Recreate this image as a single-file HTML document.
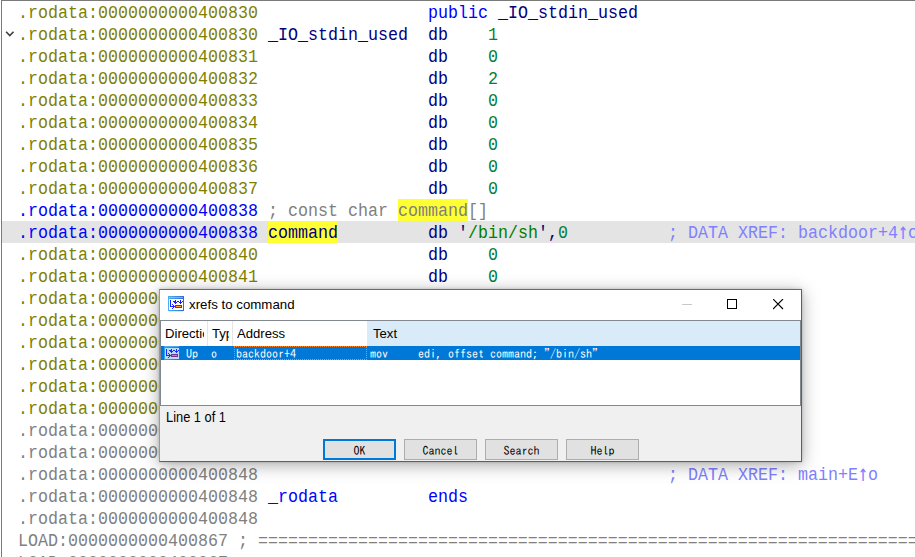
<!DOCTYPE html>
<html><head><meta charset="utf-8"><title>xrefs to command</title>
<style>
html,body{margin:0;padding:0;background:#fff;}
body{width:915px;height:557px;overflow:hidden;position:relative;font-family:"Liberation Sans",sans-serif;}
#view{position:absolute;left:0;top:0;width:915px;height:557px;overflow:hidden;background:#fff;}
#btop{position:absolute;left:1px;top:0;width:914px;height:1px;background:#7a7a7a;}
#bleft{position:absolute;left:1px;top:0;width:1px;height:557px;background:#7a7a7a;}
.r{position:absolute;left:2px;width:913px;height:22px;white-space:pre;font-family:"Liberation Mono","DejaVu Sans Mono",monospace;font-size:16.66px;line-height:22px;}
.r.cur{background:#e4e4e4;}
.s{position:absolute;top:0;height:22px;margin-left:-2px;transform:translateY(2px) scaleY(1.083);transform-origin:0 15px;}
.s.dj{font-family:"DejaVu Sans Mono","Liberation Mono",monospace;transform:translateY(1.5px) scaleY(1.4);}
.hl{position:absolute;top:0;height:22px;background:#ffff33;}
#chev{position:absolute;left:4px;top:29px;}
/* dialog */
#dlg{position:absolute;left:159px;top:289px;width:641px;height:171px;border:1px solid #5f5f5f;border-left-color:#9a9a9a;border-top-color:#6a6a6a;background:#f0f0f0;box-shadow:0 0 3px rgba(0,0,0,.18),0 3px 16px rgba(0,0,0,.34);font-size:12px;color:#000;}
#title{position:absolute;left:0;top:0;width:641px;height:30px;background:#fff;}
#title .t{position:absolute;left:29px;top:7px;font-size:13.6px;line-height:16px;white-space:pre;transform:scaleX(.977);transform-origin:0 0;}
#list{position:absolute;left:0;top:30px;width:639px;height:84px;border:1px solid #828790;background:#fff;}
#hdr{position:absolute;left:0;top:0;width:639px;height:25px;}
.h{position:absolute;top:0;height:25px;line-height:25px;font-size:13.6px;overflow:hidden;white-space:pre;}
.h span{display:inline-block;transform:scaleX(.965);transform-origin:0 0;}
.sep{position:absolute;top:0;width:1px;height:25px;background:#e5e5e5;}
#sel{position:absolute;left:0;top:25px;width:639px;height:14px;background:#0078d7;color:#fff;overflow:hidden;}
.c{position:absolute;top:0;height:14px;line-height:14px;white-space:pre;font-family:"IPAGothic","Liberation Mono",monospace;font-size:12px;}
#focus{position:absolute;left:73px;top:0;width:131px;height:12px;border:1px dotted #ff8728;}
#status{position:absolute;left:6px;top:120.4px;font-size:13.6px;line-height:16px;white-space:pre;transform:scale(.945,1.02);transform-origin:0 100%;}
.b{position:absolute;top:149px;width:71px;height:19px;border:1px solid #adadad;background:#e1e1e1;text-align:center;line-height:20px;font-family:"IPAGothic","Liberation Mono",monospace;font-size:12px;}
.b span{display:inline-block;}
.b.def{border:2px solid #0078d7;width:69px;height:17px;line-height:18px;}
</style></head><body>
<div id="view">
<div class="r" style="top:1px"><span class="s" style="left:18px;color:#808000">.rodata:0000000000400830</span><span class="s" style="left:428px;color:#0000ff">public</span><span class="s" style="left:498px;color:#000080">_IO_stdin_used</span></div>
<div class="r" style="top:23px"><span class="s" style="left:18px;color:#808000">.rodata:0000000000400830</span><span class="s" style="left:268px;color:#000080">_IO_stdin_used</span><span class="s" style="left:428px;color:#000080">db</span><span class="s" style="left:488px;color:#008040">1</span></div>
<div class="r" style="top:45px"><span class="s" style="left:18px;color:#808000">.rodata:0000000000400831</span><span class="s" style="left:428px;color:#000080">db</span><span class="s" style="left:488px;color:#008040">0</span></div>
<div class="r" style="top:67px"><span class="s" style="left:18px;color:#808000">.rodata:0000000000400832</span><span class="s" style="left:428px;color:#000080">db</span><span class="s" style="left:488px;color:#008040">2</span></div>
<div class="r" style="top:89px"><span class="s" style="left:18px;color:#808000">.rodata:0000000000400833</span><span class="s" style="left:428px;color:#000080">db</span><span class="s" style="left:488px;color:#008040">0</span></div>
<div class="r" style="top:111px"><span class="s" style="left:18px;color:#808000">.rodata:0000000000400834</span><span class="s" style="left:428px;color:#000080">db</span><span class="s" style="left:488px;color:#008040">0</span></div>
<div class="r" style="top:133px"><span class="s" style="left:18px;color:#808000">.rodata:0000000000400835</span><span class="s" style="left:428px;color:#000080">db</span><span class="s" style="left:488px;color:#008040">0</span></div>
<div class="r" style="top:155px"><span class="s" style="left:18px;color:#808000">.rodata:0000000000400836</span><span class="s" style="left:428px;color:#000080">db</span><span class="s" style="left:488px;color:#008040">0</span></div>
<div class="r" style="top:177px"><span class="s" style="left:18px;color:#808000">.rodata:0000000000400837</span><span class="s" style="left:428px;color:#000080">db</span><span class="s" style="left:488px;color:#008040">0</span></div>
<div class="r" style="top:199px"><span class="s" style="left:18px;color:#0000ff">.rodata:0000000000400838</span><span class="s" style="left:268px;color:#808080">; const char</span><i class="hl" style="left:396px;width:70px"></i><span class="s" style="left:398px;color:#808080">command</span><span class="s" style="left:468px;color:#808080">[]</span></div>
<div class="r cur" style="top:221px"><span class="s" style="left:18px;color:#0000ff">.rodata:0000000000400838</span><i class="hl" style="left:266px;width:70px"></i><span class="s" style="left:268px;color:#000080">command</span><span class="s" style="left:428px;color:#000080">db</span><span class="s" style="left:458px;color:#000080">'</span><span class="s" style="left:468px;color:#008000">/bin/sh</span><span class="s" style="left:538px;color:#000080">',</span><span class="s" style="left:558px;color:#008040">0</span><span class="s" style="left:668px;color:#8080ff">; DATA XREF: backdoor+4</span><span class="s dj" style="left:898px;color:#8080ff">↑</span><span class="s" style="left:908px;color:#8080ff">c</span></div>
<div class="r" style="top:243px"><span class="s" style="left:18px;color:#808000">.rodata:0000000000400840</span><span class="s" style="left:428px;color:#000080">db</span><span class="s" style="left:488px;color:#008040">0</span></div>
<div class="r" style="top:265px"><span class="s" style="left:18px;color:#808000">.rodata:0000000000400841</span><span class="s" style="left:428px;color:#000080">db</span><span class="s" style="left:488px;color:#008040">0</span></div>
<div class="r" style="top:287px"><span class="s" style="left:18px;color:#808000">.rodata:0000000000400842</span><span class="s" style="left:428px;color:#000080">db</span><span class="s" style="left:488px;color:#008040">0</span></div>
<div class="r" style="top:309px"><span class="s" style="left:18px;color:#808000">.rodata:0000000000400843</span><span class="s" style="left:428px;color:#000080">db</span><span class="s" style="left:488px;color:#008040">0</span></div>
<div class="r" style="top:331px"><span class="s" style="left:18px;color:#808000">.rodata:0000000000400844</span><span class="s" style="left:428px;color:#000080">db</span><span class="s" style="left:488px;color:#008040">0</span></div>
<div class="r" style="top:353px"><span class="s" style="left:18px;color:#808000">.rodata:0000000000400845</span><span class="s" style="left:428px;color:#000080">db</span><span class="s" style="left:488px;color:#008040">0</span></div>
<div class="r" style="top:375px"><span class="s" style="left:18px;color:#808000">.rodata:0000000000400846</span><span class="s" style="left:428px;color:#000080">db</span><span class="s" style="left:488px;color:#008040">0</span></div>
<div class="r" style="top:397px"><span class="s" style="left:18px;color:#808000">.rodata:0000000000400847</span><span class="s" style="left:428px;color:#000080">db</span><span class="s" style="left:488px;color:#008040">0</span></div>
<div class="r" style="top:419px"><span class="s" style="left:18px;color:#808080">.rodata:0000000000400848</span></div>
<div class="r" style="top:441px"><span class="s" style="left:18px;color:#808080">.rodata:0000000000400848</span></div>
<div class="r" style="top:463px"><span class="s" style="left:18px;color:#808080">.rodata:0000000000400848</span><span class="s" style="left:668px;color:#8080ff">; DATA XREF: main+E</span><span class="s dj" style="left:858px;color:#8080ff">↑</span><span class="s" style="left:868px;color:#8080ff">o</span></div>
<div class="r" style="top:485px"><span class="s" style="left:18px;color:#808080">.rodata:0000000000400848</span><span class="s" style="left:268px;color:#0000ff">_rodata</span><span class="s" style="left:428px;color:#0000ff">ends</span></div>
<div class="r" style="top:507px"><span class="s" style="left:18px;color:#808080">.rodata:0000000000400848</span></div>
<div class="r" style="top:529px"><span class="s" style="left:18px;color:#808080">LOAD:0000000000400867</span><span class="s" style="left:238px;color:#808080">; ===========================================================================</span></div>
<div class="r" style="top:551px"><span class="s" style="left:18px;color:#808080">LOAD:0000000000400867</span></div>
<div id="btop"></div><div id="bleft"></div>
<svg id="chev" width="12" height="10" viewBox="0 0 12 10"><path d="M2.1 2.7 L5.8 6.6 L9.5 2.7" fill="none" stroke="#404040" stroke-width="1.6"/></svg>
</div>
<div id="dlg">
 <div id="title">
  <svg style="position:absolute;left:8px;top:6px" width="16" height="16" viewBox="0 0 16 16" shape-rendering="crispEdges">
   <defs><linearGradient id="g1" x1="0" x2="1" y1="0" y2="0"><stop offset="0" stop-color="#45b4f2"/><stop offset="1" stop-color="#3569d6"/></linearGradient></defs>
   <rect x="0" y="0" width="16" height="15" fill="url(#g1)"/>
   <rect x="1" y="1" width="14" height="1" fill="#7fd0fa" opacity=".7"/>
   <rect x="1" y="3" width="14" height="11" fill="#fff"/>
   <rect x="2" y="4" width="1" height="7" fill="#1a1aff"/>
   <rect x="2" y="10" width="5" height="1" fill="#1a1aff"/>
   <rect x="5" y="9" width="1" height="3" fill="#1a1aff"/><rect x="4" y="8" width="1" height="1" fill="#1a1aff"/><rect x="4" y="12" width="1" height="1" fill="#1a1aff"/>
   <rect x="5" y="5" width="2" height="1" fill="#1a1aff"/><rect x="9" y="5" width="2" height="1" fill="#1a1aff"/><rect x="14" y="5" width="1" height="1" fill="#1a1aff"/>
   <rect x="7" y="4" width="1" height="4" fill="#1a1aff"/><rect x="6" y="6" width="3" height="1" fill="#1a1aff"/>
   <rect x="12" y="4" width="1" height="4" fill="#1a1aff"/><rect x="11" y="6" width="3" height="1" fill="#1a1aff"/>
   <rect x="7" y="9" width="7" height="3" fill="#a0187c"/>
   <rect x="8" y="10" width="5" height="1" fill="#ffa030"/>
   <rect x="1" y="15" width="14" height="1" fill="#3a6fd8" opacity=".18"/>
  </svg>
  <span class="t">xrefs to command</span>
  <svg style="position:absolute;left:522px;top:14px" width="12" height="2"><rect x="0" y="0" width="10" height="1" fill="#c8c8c8"/></svg>
  <svg style="position:absolute;left:567px;top:9px" width="12" height="12"><rect x="0.5" y="0.5" width="9" height="9" fill="none" stroke="#000" stroke-width="1"/></svg>
  <svg style="position:absolute;left:613px;top:9px" width="12" height="12"><path d="M0 0 L10 10 M10 0 L0 10" fill="none" stroke="#000" stroke-width="1.1"/></svg>
 </div>
 <div id="list">
  <div id="hdr">
   <div class="h" style="left:206px;width:433px;background:#d9ebf9;"></div>
   <div class="h" style="left:4px;width:39px;"><span>Direction</span></div>
   <div class="sep" style="left:46px"></div>
   <div class="h" style="left:51px;width:17px;"><span>Type</span></div>
   <div class="sep" style="left:71px"></div>
   <div class="h" style="left:76px;width:120px;"><span>Address</span></div>
   <div class="h" style="left:211.5px;width:120px;"><span>Text</span></div>
  </div>
  <div id="sel">
   <svg style="position:absolute;left:3px;top:-1px" width="16" height="16" viewBox="0 0 16 16" shape-rendering="crispEdges">
   <defs><linearGradient id="g2" x1="0" x2="1" y1="0" y2="0"><stop offset="0" stop-color="#45b4f2"/><stop offset="1" stop-color="#3569d6"/></linearGradient></defs>
   <rect x="0" y="0" width="16" height="15" fill="url(#g2)"/>
   <rect x="1" y="1" width="14" height="1" fill="#7fd0fa" opacity=".7"/>
   <rect x="1" y="3" width="14" height="11" fill="#fff"/>
   <rect x="2" y="4" width="1" height="7" fill="#1a1aff"/>
   <rect x="2" y="10" width="5" height="1" fill="#1a1aff"/>
   <rect x="5" y="9" width="1" height="3" fill="#1a1aff"/><rect x="4" y="8" width="1" height="1" fill="#1a1aff"/><rect x="4" y="12" width="1" height="1" fill="#1a1aff"/>
   <rect x="5" y="5" width="2" height="1" fill="#1a1aff"/><rect x="9" y="5" width="2" height="1" fill="#1a1aff"/><rect x="14" y="5" width="1" height="1" fill="#1a1aff"/>
   <rect x="7" y="4" width="1" height="4" fill="#1a1aff"/><rect x="6" y="6" width="3" height="1" fill="#1a1aff"/>
   <rect x="12" y="4" width="1" height="4" fill="#1a1aff"/><rect x="11" y="6" width="3" height="1" fill="#1a1aff"/>
   <rect x="7" y="9" width="7" height="3" fill="#a0187c"/>
   <rect x="8" y="10" width="5" height="1" fill="#ffa030"/>
   <rect x="0" y="0" width="16" height="16" fill="#0078d7" opacity=".28"/>
   </svg>
   <div id="focus"></div>
   <span class="c" style="left:25px">Up</span><span class="c" style="left:50px">o</span><span class="c" style="left:75px">backdoor+4</span><span class="c" style="left:209px">mov     edi, offset command; &quot;/bin/sh&quot;</span>
  </div>
 </div>
 <div id="status">Line 1 of 1</div>
 <div class="b def" style="left:163px"><span>OK</span></div>
 <div class="b" style="left:244px"><span>Cancel</span></div>
 <div class="b" style="left:325px"><span>Search</span></div>
 <div class="b" style="left:406px"><span>Help</span></div>
</div>
</body></html>
